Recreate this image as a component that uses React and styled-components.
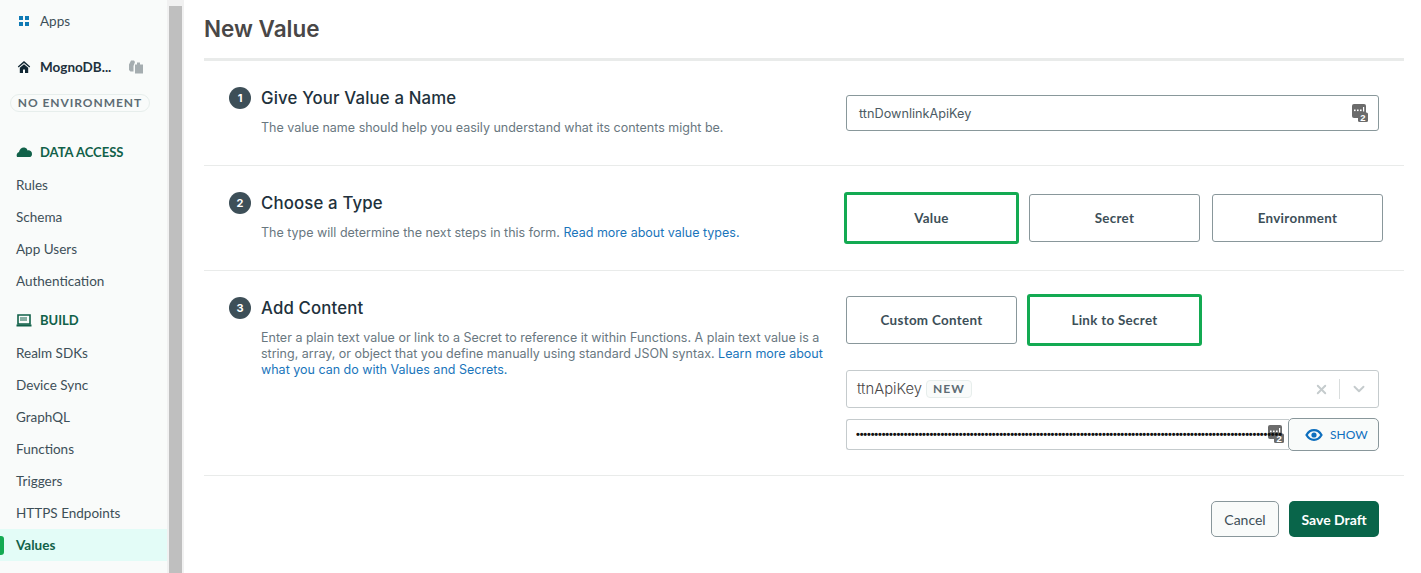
import React from "react";
import styled, { createGlobalStyle } from "styled-components";
import { X, ChevronDown } from "lucide-react";

const Global = createGlobalStyle`
  html, body { margin: 0; padding: 0; background: #fff; overflow: hidden; }
  * { box-sizing: border-box; }
  body { font-family: "Inter", "Liberation Sans", sans-serif; }
`;
const Page = styled.div`display: flex; width: 1421px; height: 573px; overflow: hidden;`;
const Sidebar = styled.nav`
  width: 167px; flex: none; height: 573px; background: #f9fbfa; overflow: hidden;
  font-family: "Lato", sans-serif; color: #3d4f58; font-size: 13.5px;
`;
const Track = styled.div`
  width: 17px; flex: none; background: #f1f1f1; padding: 6px 2px 0 2px;
`;
const Thumb = styled.div`height: 100%; background: #bfbfbf;`;
const AppsRow = styled.div`display: flex; align-items: center; height: 20px; margin-top: 11px; padding-left: 18px; gap: 10px; font-size: 13.5px;`;
const ProjectRow = styled.div`display: flex; align-items: center; margin-top: 26px; height: 20px; padding-left: 17px; gap: 9px; font-weight: 700; color: #21313c;`;
const ProjectName = styled.span`width: 79px; white-space: nowrap; font-size: 13.5px;`;
const EnvBadge = styled.div`
  margin: 17px 0 0 10px; width: 140px; height: 18px; border: 1px solid #e7eeec; border-radius: 9px;
  font-size: 12px; font-weight: 700; letter-spacing: .95px; color: #5d6c74; text-align: center; line-height: 16px; white-space: nowrap;
`;
const SectionHead = styled.div`
  display: flex; align-items: center; gap: 7px; padding-left: 16px; height: 20px; margin-top: ${p => p.$top}px;
  font-weight: 700; font-size: 13px; color: #116149; white-space: nowrap;
`;
const NavItem = styled.div`
  position: relative; height: 32px; line-height: 32px; padding-left: 16px; white-space: nowrap;
  background: ${p => p.$active ? "#e3fcf7" : "transparent"};
  font-weight: ${p => p.$active ? 700 : 400};
  color: ${p => p.$active ? "#116149" : "#3d4f58"};
`;
const ActiveMark = styled.span`position: absolute; left: 0; top: 7px; width: 4px; height: 19px; background: #13aa52; border-radius: 0 3px 3px 0;`;
const NavGroup = styled.div`margin-top: ${p => p.$top}px;`;
const Main = styled.main`width: 1200px; margin-left: 20px; flex: none;`;
const Title = styled.h1`
  margin: 0; height: 58px; padding-top: 14px; font-size: 22.5px; line-height: 30px; font-weight: 600; color: #494747;
`;
const Section = styled.section`
  display: flex; height: ${p => p.$h}px; border-top: ${p => p.$thick ? "3px solid #e9ebea" : "1px solid #e9ebea"};
  padding: ${p => p.$pt}px 0 0 25px;
`;
const Left = styled.div`width: 617px; flex: none;`;
const Heading = styled.div`display: flex; align-items: center; gap: 10px; height: 24px;`;
const Num = styled.span`
  width: 22px; height: 22px; border-radius: 50%; background: #3d4f58; color: #fff; flex: none;
  font-size: 11px; font-weight: 700; display: flex; align-items: center; justify-content: center;
`;
const H2 = styled.h2`margin: 0; font-size: 16.8px; font-weight: 500; color: #21313c; letter-spacing: .15px; white-space: nowrap;`;
const Desc = styled.p`
  margin: 10px 0 0 32px; width: 562px; font-size: 12.5px; line-height: 16px; color: #69777f;
`;
const DocLink = styled.a`color: #1a75bb; text-decoration: none;`;
const Right = styled.div`width: 537px; flex: none; font-family: "Lato", sans-serif; margin-top: ${p => p.$top || 0}px;`;
const TextField = styled.div`
  width: 533px; height: 36px; margin-top: 9px; border: 1px solid #89989b; border-radius: 3px; display: flex; align-items: center; justify-content: space-between;
  padding: 0 10px 0 12px; color: #4c5b63; font-family: "Inter", sans-serif; font-size: 12.7px;
`;
const Choices = styled.div`display: flex; gap: ${p => p.$gap}px; align-items: center;`;
const Choice = styled.div`
  height: ${p => p.$on ? 52 : 48}px; width: ${p => p.$w}px; border-radius: 3px;
  border: ${p => p.$on ? "3px solid #13aa52" : "1px solid #89979b"};
  display: flex; align-items: center; justify-content: center; font-size: 13.4px; font-weight: 700; color: #3d4f58; white-space: nowrap; letter-spacing: .3px;
  margin-left: ${p => p.$ml || 0}px;
`;
const SelectBox = styled.div`
  margin-top: 24px; width: 533px; height: 38px; border: 1px solid #c5cbcd; border-radius: 3px; display: flex; align-items: center;
  padding: 0 10px; font-family: "Inter", sans-serif; font-size: 14.8px; font-weight: 300; color: #494747;
`;
const NewTag = styled.span`
  margin-left: 4px; height: 18px; padding: 0 6px; border: 1px solid #e7eeec; background: #f9fbfa; border-radius: 4px; font-family: "Lato", sans-serif;
  font-size: 12px; font-weight: 700; letter-spacing: 1px; color: #5d6c74; line-height: 16px;
`;
const Spacer = styled.span`flex: 1;`;
const Divider = styled.span`width: 1px; height: 20px; background: #d9dddd; margin: 0 10px 0 10px;`;
const SecretRow = styled.div`display: flex; margin-top: 10px; width: 533px; align-items: center;`;
const SecretInput = styled.div`
  flex: 1; height: 31px; border: 1px solid #c5cbcd; border-right: none; border-radius: 3px 0 0 3px; position: relative;
  padding-left: 9px; font-family: "Liberation Sans", sans-serif; font-size: 11px; line-height: 28px; letter-spacing: -.18px; color: #111; white-space: nowrap;
`;
const Dots = styled.span`display: block; position: relative; width: 426px; overflow: hidden; font-weight: 700;`;
const OverIcon = styled.span`position: absolute; right: 5px; top: 5px; line-height: 0;`;
const ShowBtn = styled.div`
  width: 91px; height: 33px; margin-left: -1px; border: 1px solid #89979b; border-radius: 5px; background: #f9fbfa;
  display: flex; align-items: center; gap: 7px; padding-left: 16px; color: #0e6fbe; font-size: 12px; font-weight: 400; position: relative;
`;
const Footer = styled.div`display: flex; justify-content: flex-end; gap: 10px; padding: 25px 25px 0 0; border-top: 1px solid #e9ebea; font-family: "Lato", sans-serif; font-size: 14px;`;
const Cancel = styled.div`
  width: 68px; height: 36px; border: 1px solid #89979b; border-radius: 5px; background: #f9fbfa; color: #3d4f58;
  display: flex; align-items: center; justify-content: center;
`;
const Save = styled.div`
  width: 90px; height: 36px; border-radius: 5px; background: #09654a; color: #fff; font-weight: 700;
  display: flex; align-items: center; justify-content: center;
`;

const GridIcon = () => (
  <svg width="12" height="12" viewBox="0 0 12 12" fill="#0f7ab5"><rect x="1" y="1" width="4" height="4"/><rect x="7" y="1" width="4" height="4"/><rect x="1" y="7" width="4" height="4"/><rect x="7" y="7" width="4" height="4"/></svg>
);
const HomeIcon = () => (
  <svg width="14" height="14" viewBox="0 0 14 14" fill="#112733"><path d="M7 1 .8 6.500l.8.900L7 3l5.400 4.400.8-.900z"/><path d="M7 4.200 2.800 7.700V13h3.200V9.500h2V13h3.200V7.700z"/></svg>
);
const CopyIcon = () => (
  <svg width="16" height="14" viewBox="0 0 16 14" fill="#a5adb0"><path d="M1 4.500 3 .5h3l1 1.500L5.500 6v5.500H2.500L1 10z"/><path d="M7 4.500h2V2.500h3V4.500H15V13.500H7z"/></svg>
);
const CloudIcon = () => (
  <svg width="17" height="12" viewBox="0 0 17 12" fill="#116149"><path d="M1 11c-1-2 0-4.500 2-5 .5-3 3-5 5.500-4.500 1.700.3 2.800 1.500 3 3 2-.6 4.500.6 4.500 3.500 0 1.600-.8 3-2 3z"/></svg>
);
const LaptopIcon = () => (
  <svg width="17" height="13" viewBox="0 0 17 13"><path d="M2 1h12v9H2z" fill="none" stroke="#116149" strokeWidth="1.600"/><rect x="4" y="3" width="7" height="4" fill="#116149" opacity=".5"/><rect x="0.500" y="10.500" width="15" height="2" fill="#116149"/></svg>
);
const KeyIcon = () => (
  <svg width="16" height="18" viewBox="0 0 16 18">
    <rect x="0" y="0" width="14" height="14" rx="2" fill="#6b6b6b"/>
    <rect x="2" y="5.500" width="1.600" height="1.600" fill="#fff"/><rect x="5" y="5.500" width="1.600" height="1.600" fill="#fff"/><rect x="8" y="5.500" width="1.600" height="1.600" fill="#fff"/><rect x="11" y="3" width="1.200" height="4.500" fill="#fff"/>
    <rect x="6" y="8.500" width="10" height="9.500" rx="1.500" fill="#6b6b6b"/>
    <text x="11" y="16.700" fontSize="9.500" fontWeight="700" textAnchor="middle" fill="#fff" fontFamily="Liberation Sans">2</text>
  </svg>
);
const EyeIcon = () => (
  <svg width="18" height="14" viewBox="0 0 18 14"><path d="M1.500 7C3.300 3.800 6 2.200 9 2.200S14.700 3.800 16.500 7C14.700 10.200 12 11.800 9 11.800S3.300 10.200 1.500 7z" fill="none" stroke="#0e6fbe" strokeWidth="2.200"/><circle cx="9" cy="7" r="2.600" fill="#0e6fbe"/></svg>
);

const dots = "•".repeat(116);

export default function App() {
  return (
    <Page>
      <Global />
      <Sidebar>
        <AppsRow><GridIcon />Apps</AppsRow>
        <ProjectRow><HomeIcon /><ProjectName>MognoDB...</ProjectName><CopyIcon /></ProjectRow>
        <EnvBadge>NO ENVIRONMENT</EnvBadge>
        <SectionHead $top={30}><CloudIcon />DATA ACCESS</SectionHead>
        <NavGroup $top={7}>
          <NavItem>Rules</NavItem>
          <NavItem>Schema</NavItem>
          <NavItem>App Users</NavItem>
          <NavItem>Authentication</NavItem>
        </NavGroup>
        <SectionHead $top={13}><LaptopIcon />BUILD</SectionHead>
        <NavGroup $top={7}>
          <NavItem>Realm SDKs</NavItem>
          <NavItem>Device Sync</NavItem>
          <NavItem>GraphQL</NavItem>
          <NavItem>Functions</NavItem>
          <NavItem>Triggers</NavItem>
          <NavItem>HTTPS Endpoints</NavItem>
          <NavItem $active><ActiveMark />Values</NavItem>
        </NavGroup>
      </Sidebar>
      <Track><Thumb /></Track>
      <Main>
        <Title>New Value</Title>
        <Section $h={107} $thick $pt={25}>
          <Left>
            <Heading><Num>1</Num><H2>Give Your Value a Name</H2></Heading>
            <Desc>The value name should help you easily understand what its contents might be.</Desc>
          </Left>
          <Right>
            <TextField>ttnDownlinkApiKey<KeyIcon /></TextField>
          </Right>
        </Section>
        <Section $h={105} $pt={25}>
          <Left>
            <Heading><Num>2</Num><H2>Choose a Type</H2></Heading>
            <Desc>The type will determine the next steps in this form. <DocLink>Read more about value types.</DocLink></Desc>
          </Left>
          <Right $top={1}>
            <Choices $gap={10}>
              <Choice $on $w={175} $ml={-2}>Value</Choice>
              <Choice $w={171}>Secret</Choice>
              <Choice $w={171} $ml={2}>Environment</Choice>
            </Choices>
          </Right>
        </Section>
        <Section $h={205} $pt={25}>
          <Left>
            <Heading><Num>3</Num><H2>Add Content</H2></Heading>
            <Desc>Enter a plain text value or link to a Secret to reference it within Functions. A plain text value is a string, array, or object that you define manually using standard JSON syntax. <DocLink>Learn more about what you can do with Values and Secrets.</DocLink></Desc>
          </Left>
          <Right $top={-2}>
            <Choices $gap={10}>
              <Choice $w={171}>Custom Content</Choice>
              <Choice $on $w={175}>Link to Secret</Choice>
            </Choices>
            <SelectBox>
              ttnApiKey<NewTag>NEW</NewTag><Spacer />
              <X size={15} color="#c5cbcd" strokeWidth={3} /><Divider /><ChevronDown size={18} color="#c5cbcd" strokeWidth={2.500} />
            </SelectBox>
            <SecretRow>
              <SecretInput><OverIcon><KeyIcon /></OverIcon><Dots>{dots}</Dots></SecretInput>
              <ShowBtn><EyeIcon />SHOW</ShowBtn>
            </SecretRow>
          </Right>
        </Section>
        <Footer><Cancel>Cancel</Cancel><Save>Save Draft</Save></Footer>
      </Main>
    </Page>
  );
}
